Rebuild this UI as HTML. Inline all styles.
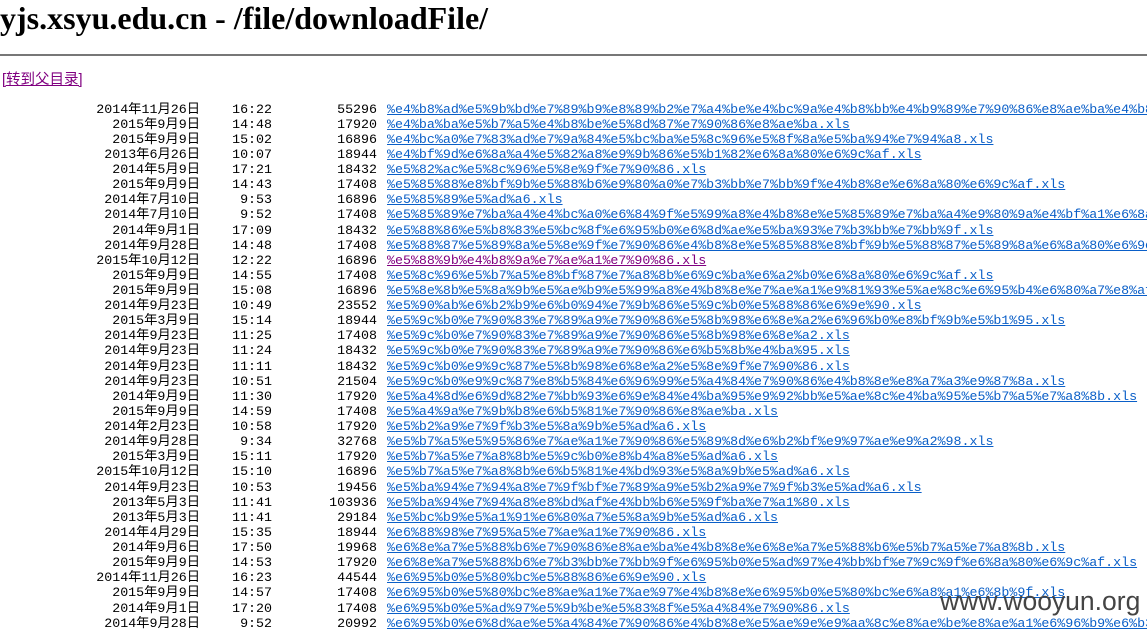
<!DOCTYPE html>
<html><head><meta charset="utf-8"><style>
html{overflow:hidden;}
body{margin:0;background:#fff;width:1147px;height:631px;overflow:hidden;position:relative;font-family:"Liberation Mono","Noto Sans CJK SC",monospace;}
#wrap{position:absolute;left:0;top:0;width:1147px;height:631px;overflow:hidden;}
h1{position:absolute;left:0;top:0;margin:0;font:bold 32px "Liberation Serif",serif;color:#000;white-space:nowrap;}
hr{position:absolute;left:0;top:54px;width:1147px;margin:0;border:0;border-top:2px solid #777;}
.p{position:absolute;left:2px;top:68px;font:14.5px "Liberation Sans","Noto Sans CJK SC",sans-serif;color:#800080;text-decoration:underline;}
.r{position:absolute;left:0;height:15px;line-height:15px;font-size:13.3px;white-space:nowrap;color:#000;overflow:hidden;}
.r span{position:absolute;text-align:right;}
.r a{position:absolute;left:387px;color:#0a5fc8;text-decoration:underline;}
.r a.v{color:#800080}
.w{position:absolute;left:940px;top:586px;font:26.5px "Liberation Sans",sans-serif;color:#444;}
</style></head><body><div id="wrap">
<h1>yjs.xsyu.edu.cn - /file/downloadFile/</h1>
<hr>
<a class="p">[转到父目录]</a>
<div id="rows"></div>
<div class="w">www.wooyun.org</div>
</div>
<script>
var D=[
["2014年11月26日","16:22","55296","%e4%b8%ad%e5%9b%bd%e7%89%b9%e8%89%b2%e7%a4%be%e4%bc%9a%e4%b8%bb%e4%b9%89%e7%90%86%e8%ae%ba%e4%b8%8e%e5%ae%9e.xls"],
["2015年9月9日","14:48","17920","%e4%ba%ba%e5%b7%a5%e4%b8%be%e5%8d%87%e7%90%86%e8%ae%ba.xls"],
["2015年9月9日","15:02","16896","%e4%bc%a0%e7%83%ad%e7%9a%84%e5%bc%ba%e5%8c%96%e5%8f%8a%e5%ba%94%e7%94%a8.xls"],
["2013年6月26日","10:07","18944","%e4%bf%9d%e6%8a%a4%e5%82%a8%e9%9b%86%e5%b1%82%e6%8a%80%e6%9c%af.xls"],
["2014年5月9日","17:21","18432","%e5%82%ac%e5%8c%96%e5%8e%9f%e7%90%86.xls"],
["2015年9月9日","14:43","17408","%e5%85%88%e8%bf%9b%e5%88%b6%e9%80%a0%e7%b3%bb%e7%bb%9f%e4%b8%8e%e6%8a%80%e6%9c%af.xls"],
["2014年7月10日","9:53","16896","%e5%85%89%e5%ad%a6.xls"],
["2014年7月10日","9:52","17408","%e5%85%89%e7%ba%a4%e4%bc%a0%e6%84%9f%e5%99%a8%e4%b8%8e%e5%85%89%e7%ba%a4%e9%80%9a%e4%bf%a1%e6%8a%80.xls"],
["2014年9月1日","17:09","18432","%e5%88%86%e5%b8%83%e5%bc%8f%e6%95%b0%e6%8d%ae%e5%ba%93%e7%b3%bb%e7%bb%9f.xls"],
["2014年9月28日","14:48","17408","%e5%88%87%e5%89%8a%e5%8e%9f%e7%90%86%e4%b8%8e%e5%85%88%e8%bf%9b%e5%88%87%e5%89%8a%e6%8a%80%e6%9c%af.xls"],
["2015年10月12日","12:22","16896","%e5%88%9b%e4%b8%9a%e7%ae%a1%e7%90%86.xls",1],
["2015年9月9日","14:55","17408","%e5%8c%96%e5%b7%a5%e8%bf%87%e7%a8%8b%e6%9c%ba%e6%a2%b0%e6%8a%80%e6%9c%af.xls"],
["2015年9月9日","15:08","16896","%e5%8e%8b%e5%8a%9b%e5%ae%b9%e5%99%a8%e4%b8%8e%e7%ae%a1%e9%81%93%e5%ae%8c%e6%95%b4%e6%80%a7%e8%af%84.xls"],
["2014年9月23日","10:49","23552","%e5%90%ab%e6%b2%b9%e6%b0%94%e7%9b%86%e5%9c%b0%e5%88%86%e6%9e%90.xls"],
["2015年3月9日","15:14","18944","%e5%9c%b0%e7%90%83%e7%89%a9%e7%90%86%e5%8b%98%e6%8e%a2%e6%96%b0%e8%bf%9b%e5%b1%95.xls"],
["2014年9月23日","11:25","17408","%e5%9c%b0%e7%90%83%e7%89%a9%e7%90%86%e5%8b%98%e6%8e%a2.xls"],
["2014年9月23日","11:24","18432","%e5%9c%b0%e7%90%83%e7%89%a9%e7%90%86%e6%b5%8b%e4%ba%95.xls"],
["2014年9月23日","11:11","18432","%e5%9c%b0%e9%9c%87%e5%8b%98%e6%8e%a2%e5%8e%9f%e7%90%86.xls"],
["2014年9月23日","10:51","21504","%e5%9c%b0%e9%9c%87%e8%b5%84%e6%96%99%e5%a4%84%e7%90%86%e4%b8%8e%e8%a7%a3%e9%87%8a.xls"],
["2014年9月9日","11:30","17920","%e5%a4%8d%e6%9d%82%e7%bb%93%e6%9e%84%e4%ba%95%e9%92%bb%e5%ae%8c%e4%ba%95%e5%b7%a5%e7%a8%8b.xls"],
["2015年9月9日","14:59","17408","%e5%a4%9a%e7%9b%b8%e6%b5%81%e7%90%86%e8%ae%ba.xls"],
["2014年2月23日","10:58","17920","%e5%b2%a9%e7%9f%b3%e5%8a%9b%e5%ad%a6.xls"],
["2014年9月28日","9:34","32768","%e5%b7%a5%e5%95%86%e7%ae%a1%e7%90%86%e5%89%8d%e6%b2%bf%e9%97%ae%e9%a2%98.xls"],
["2015年3月9日","15:11","17920","%e5%b7%a5%e7%a8%8b%e5%9c%b0%e8%b4%a8%e5%ad%a6.xls"],
["2015年10月12日","15:10","16896","%e5%b7%a5%e7%a8%8b%e6%b5%81%e4%bd%93%e5%8a%9b%e5%ad%a6.xls"],
["2014年9月23日","10:53","19456","%e5%ba%94%e7%94%a8%e7%9f%bf%e7%89%a9%e5%b2%a9%e7%9f%b3%e5%ad%a6.xls"],
["2013年5月3日","11:41","103936","%e5%ba%94%e7%94%a8%e8%bd%af%e4%bb%b6%e5%9f%ba%e7%a1%80.xls"],
["2013年5月3日","11:41","29184","%e5%bc%b9%e5%a1%91%e6%80%a7%e5%8a%9b%e5%ad%a6.xls"],
["2014年4月29日","15:35","18944","%e6%88%98%e7%95%a5%e7%ae%a1%e7%90%86.xls"],
["2014年9月6日","17:50","19968","%e6%8e%a7%e5%88%b6%e7%90%86%e8%ae%ba%e4%b8%8e%e6%8e%a7%e5%88%b6%e5%b7%a5%e7%a8%8b.xls"],
["2015年9月9日","14:53","17920","%e6%8e%a7%e5%88%b6%e7%b3%bb%e7%bb%9f%e6%95%b0%e5%ad%97%e4%bb%bf%e7%9c%9f%e6%8a%80%e6%9c%af.xls"],
["2014年11月26日","16:23","44544","%e6%95%b0%e5%80%bc%e5%88%86%e6%9e%90.xls"],
["2015年9月9日","14:57","17408","%e6%95%b0%e5%80%bc%e8%ae%a1%e7%ae%97%e4%b8%8e%e6%95%b0%e5%80%bc%e6%a8%a1%e6%8b%9f.xls"],
["2014年9月1日","17:20","17408","%e6%95%b0%e5%ad%97%e5%9b%be%e5%83%8f%e5%a4%84%e7%90%86.xls"],
["2014年9月28日","9:52","20992","%e6%95%b0%e6%8d%ae%e5%a4%84%e7%90%86%e4%b8%8e%e5%ae%9e%e9%aa%8c%e8%ae%be%e8%ae%a1%e6%96%b9%e6%b3%95.xls"]
];
var h="";
D.forEach(function(r,i){
 var t=(101.5+i*15.12).toFixed(1);
 h+='<div class="r" style="top:'+t+'px;width:1147px">'+
 '<span style="right:947px">'+r[0]+'</span>'+
 '<span style="right:875px">'+r[1]+'</span>'+
 '<span style="right:770px">'+r[2]+'</span>'+
 '<a'+(r[4]?' class="v"':'')+'>'+r[3]+'</a></div>';
});
document.getElementById("rows").innerHTML=h;
</script>
</body></html>
